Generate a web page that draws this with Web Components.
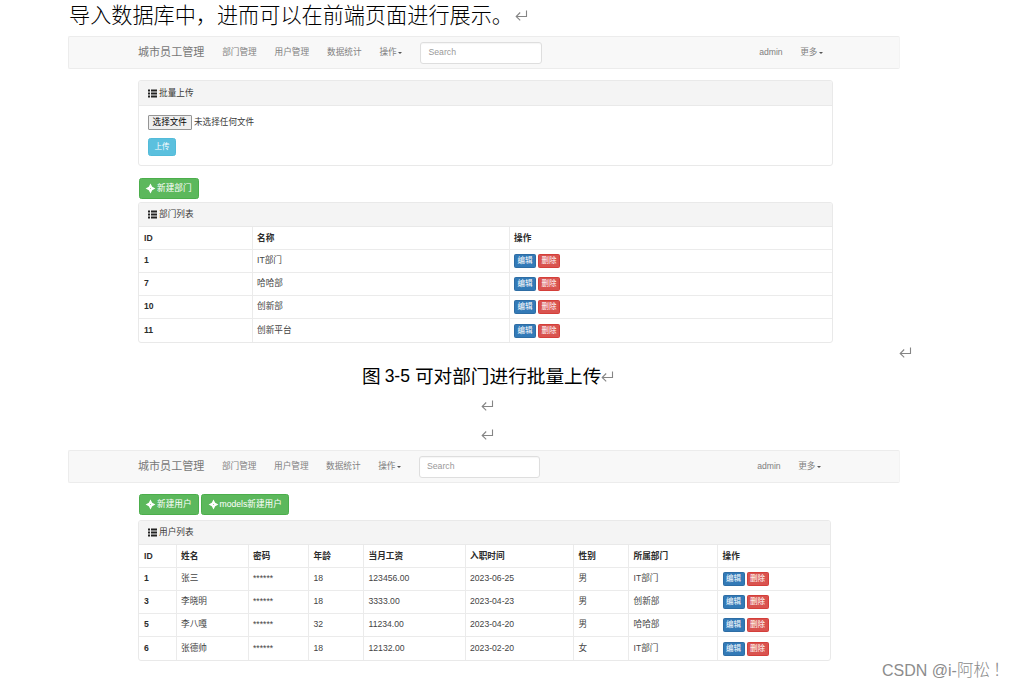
<!DOCTYPE html>
<html lang="zh-CN">
<head>
<meta charset="utf-8">
<title>城市员工管理</title>
<style>
  html, body { margin: 0; background: #fff; }
  body { width: 1013px; height: 688px; overflow: hidden; }
</style>
</head>
<body>
<doc-page></doc-page>

<script>
function define(name, html, setup) {
  customElements.define(name, class extends HTMLElement {
    constructor() {
      super();
      this.attachShadow({ mode: "open" });
    }
    connectedCallback() {
      this.shadowRoot.innerHTML = html;
      if (setup) setup(this, this.shadowRoot);
    }
  });
}

// Paragraph mark of the word processor
define("return-mark", `
<style>
  :host { display: inline-block; width: 13px; height: 11px; }
  svg { display: block; }
</style>
<svg width="13" height="11" viewBox="0 0 13 11" fill="none" stroke="#858585" stroke-width="1.1">
  <path d="M11.5 0.5V6.5H1.5M5.2 2.5L1.2 6.5L5.2 10.3"/>
</svg>
`);

define("glyph-icon", `
<style>
  :host { display: inline-block; width: 9px; height: 9px; flex: none; }
  svg { display: none; width: 9px; height: 9px; overflow: visible; }
  :host([name="list"]) .list, :host([name="plus"]) .plus { display: block; }
</style>
<svg class="list" viewBox="0 0 9 9" fill="#222">
  <path d="M0 .6h2v2H0zM3 .6h6v2H3zM0 3.5h2v2H0zM3 3.5h6v2H3zM0 6.4h2v2H0zM3 6.4h6v2H3z"/>
</svg>
<svg class="plus" viewBox="0 0 9 9" fill="#fff" fill-rule="evenodd">
  <path d="M4.5 -.4L6.2 2.8L9.4 4.5L6.2 6.2L4.5 9.4L2.8 6.2L-.4 4.5L2.8 2.8ZM4.5 3.9L3.9 4.5L4.5 5.1L5.1 4.5Z"/>
</svg>
`);

define("nav-link", `
<style>
  :host { display: flex; align-items: center; color: #808080; white-space: nowrap; }
  i { display: none; margin: 1px 0 0 1.5px; border: 2.3px solid transparent; border-top-color: #555; border-bottom: 0; }
  :host([caret]) i { display: block; }
</style>
<slot></slot><i></i>
`);

define("nav-bar", `
<style>
  :host { display: block; box-sizing: border-box; height: 33px; background: #f8f8f8; border: 1px solid #ececec; border-right-color: #f3f3f3; border-radius: 2px; padding: 0 76px 0 69px; }
  nav { display: flex; align-items: center; height: 31px; gap: var(--nav-gap, 17.6px); }
  .brand { font-size: 11.05px; color: #777; white-space: nowrap; }
  input { box-sizing: border-box; width: 121.5px; height: 22px; margin: 0 0 0 .4px; padding: 0 7px 1px; border: 1px solid #dedede; border-radius: 3px; background: #fff; font: 8.7px "Liberation Sans", sans-serif; box-shadow: inset 0 1px 1px rgba(0,0,0,.04); }
  input::placeholder { color: #999; opacity: 1; }
  .right { display: flex; gap: 17.6px; margin-left: auto; }
</style>
<nav>
  <span class="brand">城市员工管理</span>
  <nav-link>部门管理</nav-link>
  <nav-link>用户管理</nav-link>
  <nav-link>数据统计</nav-link>
  <nav-link caret>操作</nav-link>
  <input type="text" placeholder="Search">
  <div class="right">
    <nav-link>admin</nav-link>
    <nav-link caret>更多</nav-link>
  </div>
</nav>
`);

define("ui-button", `
<style>
  :host { display: inline-flex; vertical-align: top; }
  button { display: flex; align-items: center; justify-content: center; gap: 2px; box-sizing: border-box; height: 20.5px; margin: 0; padding: 0 6.5px; border: 1px solid #4cae4c; border-radius: 2.5px; background: #5cb85c; color: #fff; font: inherit; font-size: 8.65px; line-height: 1; white-space: nowrap; }
  :host([kind="info"]) button { width: 28px; height: 18px; padding: 0; background: #5bc0de; border-color: #52bbd9; font-size: 7.5px; }
  :host([kind="edit"]) button, :host([kind="delete"]) button { width: 22px; height: 13.5px; padding: 0; border-radius: 1.5px; font-size: 7.5px; }
  :host([kind="edit"]) button { background: #337ab7; border-color: #2e6da4; }
  :host([kind="delete"]) button { background: #d9534f; border-color: #d43f3a; }
</style>
<button type="button"><slot></slot></button>
`);

define("ui-panel", `
<style>
  :host { display: block; box-sizing: border-box; border: 1px solid #e9e9e9; border-radius: 3px; background: #fff; overflow: hidden; }
  header { display: flex; align-items: center; gap: 2px; box-sizing: border-box; height: var(--head-height, 24px); padding: 0 9px; background: #f4f4f4; border-bottom: 1px solid #e9e9e9; color: #3a3a3a; }
</style>
<header><glyph-icon name="list"></glyph-icon><slot name="title"></slot></header>
<slot></slot>
`);

define("file-upload", `
<style>
  :host { display: flex; flex-direction: column; align-items: flex-start; gap: 8px; height: 52px; padding: 8.5px 9px 0; }
  .pick { display: flex; align-items: center; gap: 2.5px; color: #3a3a3a; font-size: 8.6px; }
  .pick button { box-sizing: border-box; width: 43.5px; height: 15px; margin: 0; padding: 0; border: 1px solid #959595; border-radius: 1px; background: #efefef; color: #000; font: inherit; line-height: 1; white-space: nowrap; }
</style>
<div class="pick"><button type="button">选择文件</button><span>未选择任何文件</span></div>
<ui-button kind="info">上传</ui-button>
`);

define("data-table", `
<style>
  :host { display: block; color: #444; }
  .row { display: grid; grid-template-columns: var(--cols); height: 23.15px; box-sizing: border-box; border-bottom: 1px solid #ebebeb; }
  .row.head { height: 22.6px; font-weight: bold; color: #2c2c2c; }
  .row:last-child { border-bottom: 0; }
  .cell { display: flex; align-items: center; gap: 2px; box-sizing: border-box; padding: 0 4.5px 1px; border-right: 1px solid #ebebeb; white-space: nowrap; }
  .head .cell { padding-bottom: 0; }
  .cell:last-child { border-right: 0; }
  .cell:first-child { font-weight: bold; color: #2c2c2c; padding-left: 5px; }
  .cell ui-button { margin-top: 1.5px; }
</style>
<div class="body"></div>
`, (host, root) => {
  const data = TABLES[host.getAttribute("source")];
  const actions = '<ui-button kind="edit">编辑</ui-button><ui-button kind="delete">删除</ui-button>';
  const row = (cells, cls) => `<div class="row ${cls}">${cells.map((c) => `<div class="cell">${c}</div>`).join("")}</div>`;
  host.style.setProperty("--cols", data.cols);
  root.querySelector(".body").innerHTML =
    row(data.head, "head") + data.rows.map((r) => row([...r, actions], "")).join("");
});

const TABLES = {
  departments: {
    cols: "113.5px 257px 1fr",
    head: ["ID", "名称", "操作"],
    rows: [["1", "IT部门"], ["7", "哈哈部"], ["10", "创新部"], ["11", "创新平台"]],
  },
  users: {
    cols: "37.5px 72px 60.5px 55px 101.5px 108.5px 55px 89px 1fr",
    head: ["ID", "姓名", "密码", "年龄", "当月工资", "入职时间", "性别", "所属部门", "操作"],
    rows: [
      ["1", "张三", "******", "18", "123456.00", "2023-06-25", "男", "IT部门"],
      ["3", "李晓明", "******", "18", "3333.00", "2023-04-23", "男", "创新部"],
      ["5", "李八嘎", "******", "32", "11234.00", "2023-04-20", "男", "哈哈部"],
      ["6", "张德帅", "******", "18", "12132.00", "2023-02-20", "女", "IT部门"],
    ],
  },
};

define("doc-page", `
<style>
  :host { display: block; position: relative; width: 1013px; height: 688px; overflow: hidden; color: #000; font: 8.65px/1.2 "Liberation Sans", "Noto Sans CJK SC", sans-serif; }
  .line { display: flex; align-items: center; white-space: nowrap; }
  .lead { height: 36px; padding: 0 0 4px 69px; box-sizing: border-box; gap: 2px; font: 300 21.15px/26px "Liberation Sans", "Noto Sans CJK SC", sans-serif; }
  .lead return-mark { margin-bottom: 1px; }
  .figure { display: flex; align-items: flex-end; padding-left: 68px; }
  .shot { width: 832px; }
  .first { height: 322px; --nav-gap: 17.9px; }
  .second { height: 220px; margin-top: 1px; }
  .content { display: flex; flex-direction: column; width: 695px; margin-left: 70px; }
  .second .content { width: 693px; }
  .upload { height: 86px; margin: 11px 0 12px; --head-height: 25px; }
  .buttons { display: flex; gap: 2px; height: 21px; margin: 0 0 3px .5px; }
  .second .buttons { margin-top: 11px; margin-bottom: 5px; }
  .caption { height: 29px; padding-left: 362px; font: 18.65px/29px "Liberation Sans", "Noto Sans CJK SC", sans-serif; margin-top: 4px; }
  .num { font-size: 17.5px; margin: 0 5px 0 4px; }
  .blank { height: 29px; padding-left: 481px; }
  .first-mark { position: relative; left: -1px; }
  .watermark { position: absolute; left: 882px; top: 659px; font: 300 16px/22px "Liberation Sans", "Noto Sans CJK SC", sans-serif; color: #8c8c8c; white-space: nowrap; }
  .watermark .cjk { font-size: 16.5px; }
  .watermark .mark { margin-left: 3px; }
</style>
<div class="line lead"><span>导入数据库中，进而可以在前端页面进行展示。</span><return-mark></return-mark></div>
<div class="figure">
  <div class="shot first">
    <nav-bar></nav-bar>
    <div class="content">
      <ui-panel class="upload"><span slot="title">批量上传</span><file-upload></file-upload></ui-panel>
      <div class="buttons"><ui-button><glyph-icon name="plus"></glyph-icon>新建部门</ui-button></div>
      <ui-panel><span slot="title">部门列表</span><data-table source="departments"></data-table></ui-panel>
    </div>
  </div>
  <return-mark class="first-mark"></return-mark>
</div>
<div class="line caption"><span>图</span><span class="num">3-5</span><span>可对部门进行批量上传</span><return-mark></return-mark></div>
<div class="line blank"><return-mark></return-mark></div>
<div class="line blank"><return-mark></return-mark></div>
<div class="figure">
  <div class="shot second">
    <nav-bar style="padding-right:78px"></nav-bar>
    <div class="content">
      <div class="buttons">
        <ui-button><glyph-icon name="plus"></glyph-icon>新建用户</ui-button>
        <ui-button><glyph-icon name="plus"></glyph-icon>models新建用户</ui-button>
      </div>
      <ui-panel><span slot="title">用户列表</span><data-table source="users"></data-table></ui-panel>
    </div>
  </div>
</div>
<div class="watermark">CSDN @i-<span class="cjk">阿松<span class="mark">！</span></span></div>
`);
</script>
</body>
</html>
